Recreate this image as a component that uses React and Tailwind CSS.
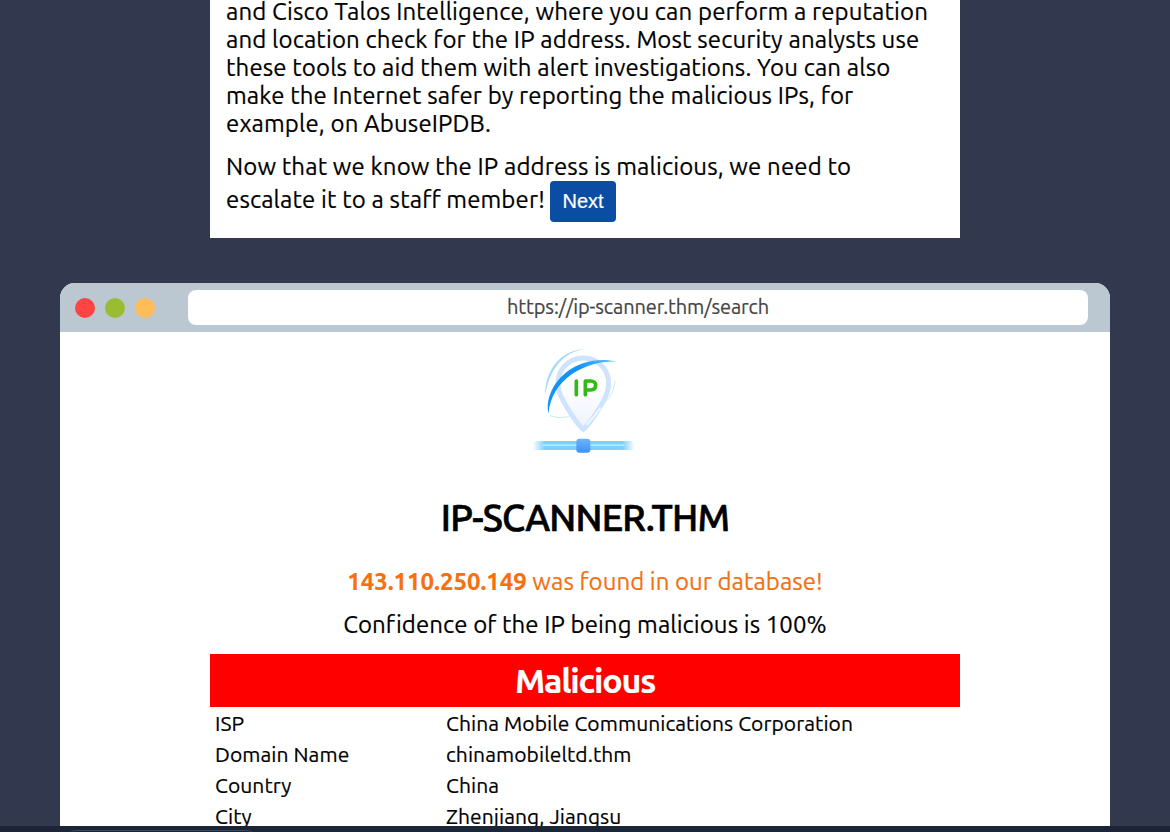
const rows = [
  ["ISP", "China Mobile Communications Corporation"],
  ["Domain Name", "chinamobileltd.thm"],
  ["Country", "China"],
  ["City", "Zhenjiang, Jiangsu"],
];

const intro = [
  "and Cisco Talos Intelligence, where you can perform a reputation",
  "and location check for the IP address. Most security analysts use",
  "these tools to aid them with alert investigations. You can also",
  "make the Internet safer by reporting the malicious IPs, for",
  "example, on AbuseIPDB.",
];

function Logo() {
  return (
    <svg className="block h-[130px] w-[130px]" viewBox="0 0 390 390" fill="none">
      <defs>
        <linearGradient id="pin" x1="0" y1="0" x2="0" y2="1">
          <stop offset="0.4" stopColor="#ffffff" />
          <stop offset="1" stopColor="#eef1fd" />
        </linearGradient>
        <linearGradient id="bar" x1="0" y1="0" x2="1" y2="0">
          <stop offset="0" stopColor="#7dd0fa" stopOpacity="0" />
          <stop offset="0.12" stopColor="#7dd0fa" />
          <stop offset="0.88" stopColor="#7dd0fa" />
          <stop offset="1" stopColor="#7dd0fa" stopOpacity="0" />
        </linearGradient>
        <linearGradient id="swoosh" x1="0" y1="1" x2="1" y2="0">
          <stop offset="0" stopColor="#1593f5" />
          <stop offset="0.65" stopColor="#1293f8" />
          <stop offset="1" stopColor="#5ec2fb" />
        </linearGradient>
        <linearGradient id="node" x1="0" y1="0" x2="0" y2="1">
          <stop offset="0" stopColor="#6cb4ff" />
          <stop offset="1" stopColor="#3d93f6" />
        </linearGradient>
      </defs>
      <path
        d="M190 283C174 270 156 242 138 212C122 185 114 169 114 146C114 102 147 69 190 69C233 69 266 102 266 146C266 169 258 187 242 213C224 243 206 270 190 283Z"
        fill="url(#pin)"
        stroke="#cfe3fd"
        strokeWidth="15"
      />
      <path d="M201 268C216 253 229 237 241 220" stroke="#f5faff" strokeWidth="5" strokeLinecap="round" />
      <path d="M76 182C72 107 125 43 194 43C134 49 87 101 76 182Z" fill="#a5dafa" />
      <path d="M88 241C108 249 128 249 147 244" stroke="#c9e9fd" strokeWidth="3" />
      <path d="M285 137C283 163 274 181 262 196" stroke="#cdeafc" strokeWidth="3" />
      <path d="M85 236C77 194 95 148 137 113C179 79 239 67 291 80C242 78 196 91 155 118C115 147 91 184 85 236Z" fill="url(#swoosh)" />
      <path d="M169 138V179" stroke="#32b915" strokeWidth="11" strokeLinecap="round" />
      <path
        d="M196 179V138H212C221 138 227 143 227 151C227 160 221 165 212 165H196"
        stroke="#32b915"
        strokeWidth="11"
        strokeLinecap="round"
        strokeLinejoin="round"
      />
      <rect x="38" y="318" width="306" height="27" fill="url(#bar)" />
      <rect x="68" y="328" width="246" height="5" fill="#b5eafd" />
      <rect x="169" y="311" width="42" height="42" rx="9" fill="url(#node)" />
    </svg>
  );
}

export default function App() {
  return (
    <div className="flex h-[832px] w-full flex-col overflow-hidden bg-[#32394e] font-['Ubuntu','Noto_Sans',sans-serif] text-2xl leading-7 tracking-[0.13px] text-black">
      <main className="flex min-h-0 flex-1 flex-col items-center overflow-hidden">
        <section className="-mt-[2px] h-[240px] w-[750px] shrink-0 bg-white px-4 [-webkit-text-stroke:0.2px]">
          <p className="whitespace-nowrap">
            {intro.map((line) => (
              <span key={line} className="block">{line}</span>
            ))}
          </p>
          <div className="mt-[15px] whitespace-nowrap">
            <p>Now that we know the IP address is malicious, we need to</p>
            <div className="flex items-start">
              <span className="w-[324px] pt-[5px]">escalate it to a staff member!</span>
              <button className="h-[41px] w-[66px] rounded-[4px] bg-[#0a4da2] pb-0.5 font-['Liberation_Sans',sans-serif] text-xl tracking-normal text-white">
                Next
              </button>
            </div>
          </div>
        </section>

        <section className="mt-[45px] w-[1050px] shrink-0 overflow-hidden rounded-t-[15px] bg-white">
          <header className="flex h-[49px] items-center bg-[#bcc8d1] pl-[15px]">
            <div className="flex gap-2.5">
              <span className="size-5 rounded-full bg-[#ff4544]" />
              <span className="size-5 rounded-full bg-[#99bc32]" />
              <span className="size-5 rounded-full bg-[#ffbd59]" />
            </div>
            <div className="ml-[33px] h-[35px] w-[900px] rounded-lg bg-white text-center text-xl leading-[34px] tracking-[-0.11px] text-[#444] [-webkit-text-stroke:0.2px]">
              https://ip-scanner.thm/search
            </div>
          </header>
          <div className="flex flex-col items-center pt-[3px] [-webkit-text-stroke:0.2px]">
            <Logo />
            <h1 className="mt-[32px] text-[37px] leading-[42px] font-medium tracking-[-0.78px] [-webkit-text-stroke:0.7px]">
              IP-SCANNER.THM
            </h1>
            <p className="mt-[29px] text-[#f5700f]">
              <b className="font-bold tracking-[-0.05px]">143.110.250.149</b> <span className="tracking-[0.05px]">was found in our database!</span>
            </p>
            <p className="mt-[15px] tracking-[0.08px]">Confidence of the IP being malicious is 100%</p>
            <div className="mt-[15px] h-[53px] w-[750px] bg-[#ff0000] text-center text-[34px] leading-[53px] font-bold tracking-[-1.2px] text-white">
              Malicious
            </div>
            <dl className="w-[750px] pt-px text-[21px] leading-[31px] tracking-[0.08px]">
              {rows.map(([label, value]) => (
                <div key={label} className="grid grid-cols-[231px_1fr] pl-[5px]">
                  <dt>{label}</dt>
                  <dd>{value}</dd>
                </div>
              ))}
            </dl>
          </div>
        </section>
      </main>
      <footer className="h-1.5 shrink-0 overflow-hidden bg-[#1c2538] pt-1 pl-[69px]">
        <div className="h-5 w-[185px] rounded-md border border-[#3b4558]" />
      </footer>
    </div>
  );
}
